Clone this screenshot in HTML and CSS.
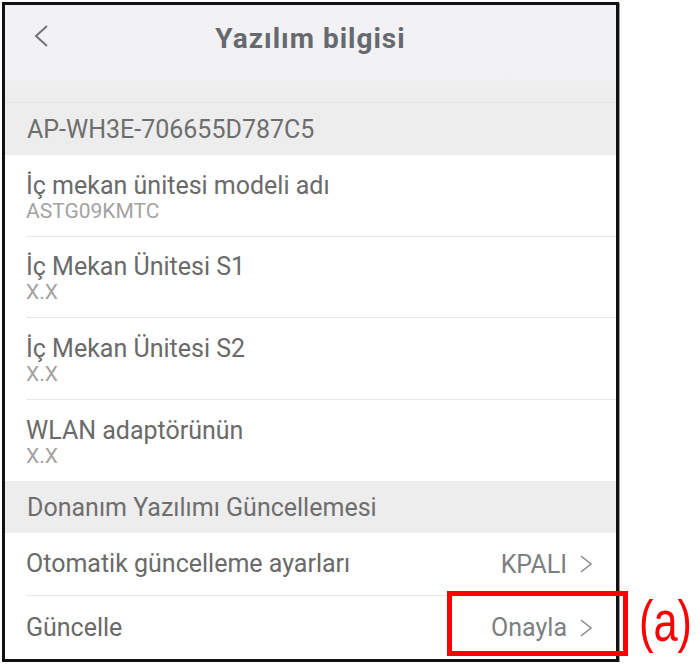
FILE: index.html
```html
<!DOCTYPE html>
<html lang="tr">
<head>
  <meta charset="UTF-8">
  <meta name="viewport" content="width=device-width, initial-scale=1">
  <title>Yazılım bilgisi</title>
  <link rel="stylesheet" href="styles.css">
</head>
<body>
  <div class="page">
    <div class="screen">
      <header class="topbar">
        <span class="back">
          <svg width="16" height="24" viewBox="0 0 16 24"><path d="M14 2 L3 12 L14 22" fill="none" stroke="#6f7378" stroke-width="2"/></svg>
        </span>
        <h1>Yazılım bilgisi</h1>
      </header>

      <div class="group-title">AP-WH3E-706655D787C5</div>
      <ul class="info-list">
        <li class="info-row">
          <span class="label">İç mekan ünitesi modeli adı</span>
          <span class="value">ASTG09KMTC</span>
        </li>
        <li class="info-row">
          <span class="label">İç Mekan Ünitesi S1</span>
          <span class="value">X.X</span>
        </li>
        <li class="info-row">
          <span class="label">İç Mekan Ünitesi S2</span>
          <span class="value">X.X</span>
        </li>
        <li class="info-row">
          <span class="label">WLAN adaptörünün</span>
          <span class="value">X.X</span>
        </li>
      </ul>

      <div class="group-title">Donanım Yazılımı Güncellemesi</div>
      <ul class="action-list">
        <li class="action-row">
          <span class="label">Otomatik güncelleme ayarları</span>
          <span class="action-value">KPALI
            <svg width="14" height="20" viewBox="0 0 14 20"><path d="M2 2 L12 10 L2 18" fill="none" stroke="#8a8d91" stroke-width="1.6"/></svg>
          </span>
        </li>
        <li class="action-row">
          <span class="label">Güncelle</span>
          <span class="action-value">Onayla
            <svg width="14" height="20" viewBox="0 0 14 20"><path d="M2 2 L12 10 L2 18" fill="none" stroke="#8a8d91" stroke-width="1.6"/></svg>
          </span>
        </li>
      </ul>
    </div>

    <!-- annotation -->
    <div class="callout"></div>
    <span class="callout-label">(a)</span>
  </div>
</body>
</html>
```

FILE: styles.css
```css
* {
  margin: 0;
  padding: 0;
  box-sizing: border-box;
}

body {
  background: #fff;
  font-family: Roboto, "Liberation Sans", sans-serif;
}

.page {
  position: relative;
  padding: 2px 0 0 2px;
}

.screen {
  width: 617px;
  height: 660px;
  border: 3px solid #111;
  box-shadow: 1px 1px 0 #999;
  background: #fff;
  overflow: hidden;
}

.topbar {
  height: 98px;
  background: linear-gradient(#f2f2f4 0, #f2f2f4 70%, #ececed 100%);
  border-bottom: 1px solid #e4e4e4;
  display: flex;
  align-items: flex-start;
  position: relative;
}

.back {
  position: absolute;
  left: 28px;
  top: 19px;
}

.topbar h1 {
  width: 100%;
  text-align: center;
  font-size: 28px;
  font-weight: 700;
  letter-spacing: 1px;
  color: #66696d;
  line-height: 32px;
  padding-top: 18px;
}

.group-title {
  height: 52px;
  background: #ededed;
  display: flex;
  align-items: center;
  padding-left: 22px;
  font-size: 25px;
  color: #6e6e6e;
}

ul {
  list-style: none;
}

.info-row {
  height: 81.5px;
  display: flex;
  flex-direction: column;
  justify-content: center;
  margin-left: 21px;
  padding-top: 3px;
  border-bottom: 1px solid #e6e6e6;
}

.info-row:last-child {
  border-bottom: none;
}

.label {
  font-size: 25px;
  line-height: 28px;
  color: #6a6a6a;
}

.value {
  font-size: 21px;
  line-height: 22px;
  color: #a3a3a3;
}

.action-row {
  height: 63px;
  display: flex;
  align-items: center;
  justify-content: space-between;
  margin-left: 21px;
  padding-right: 23px;
  border-bottom: 1px solid #e6e6e6;
}

.action-row:last-child {
  border-bottom: none;
}

.action-value {
  display: flex;
  align-items: center;
  gap: 12px;
  font-size: 25px;
  color: #7c7f83;
}

.callout {
  position: absolute;
  left: 447px;
  top: 591px;
  width: 181px;
  height: 65px;
  border: 5px solid #ff0000;
}

.callout-label {
  position: absolute;
  left: 639px;
  top: 587px;
  font-family: "Liberation Sans", sans-serif;
  font-size: 57px;
  line-height: 68px;
  color: #ff0000;
  transform: scaleX(0.76);
  transform-origin: left top;
}
```
